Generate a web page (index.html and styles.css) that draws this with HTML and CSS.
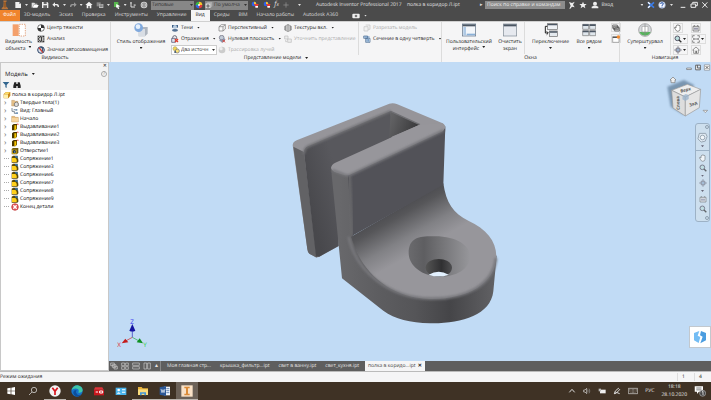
FILE: index.html
```html
<!DOCTYPE html>
<html lang="ru">
<head>
  <meta charset="UTF-8">
  <title>Autodesk Inventor Professional 2017</title>
  <link rel="stylesheet" href="styles.css">
</head>
<body>
  <!-- icon set -->
  <svg class="sprite" aria-hidden="true">
    <symbol id="i-new" viewBox="0 0 24 24"><path d="M4 3h11l6 6v12H4z" fill="#eee"/><path d="M15 3v6h6" fill="#999"/></symbol>
    <symbol id="i-open" viewBox="0 0 24 24"><path d="M2 5h8l3 3h6v3H8l-4 9H2z" fill="#ddd"/><path d="M8 12h15l-4 8H5z" fill="#fff"/></symbol>
    <symbol id="i-save" viewBox="0 0 24 24"><path d="M3 3h16l3 3v15H3z" fill="#eee"/><path d="M8 3h9v6H8zM7 13h11v8H7z" fill="#666"/></symbol>
    <symbol id="i-undo" viewBox="0 0 24 24"><path d="M9 4v5h6q6 0 6 9h-4q0-5-4-5H9v5L1 11z" fill="#eee"/></symbol>
    <symbol id="i-redo" viewBox="0 0 24 24"><path d="M15 4v5H9q-6 0-6 9h4q0-5 4-5h4v5l8-7z" fill="#999"/></symbol>
    <symbol id="i-home" viewBox="0 0 24 24"><path d="M12 2L1 12h4v10h5v-7h4v7h5V12h4z" fill="#f4f4f4"/></symbol>
    <symbol id="i-props" viewBox="0 0 24 24"><path d="M2 4h12v12H2z" fill="#888"/><path d="M9 9h13v12H9z" fill="#bbb"/><path d="M11 12h9M11 16h9" stroke="#555" stroke-width="2"/></symbol>
    <symbol id="i-update" viewBox="0 0 24 24"><path d="M3 3h13v15H3z" fill="#57b64d"/><path d="M10 9l12 7-6 1 3 6-4 1-3-6-3 3z" fill="#fff"/></symbol>
    <symbol id="i-pick" viewBox="0 0 24 24"><path d="M3 3h6v6H3zM14 10h6v5h-6z" fill="#aaa"/><path d="M6 9v9h12" stroke="#ddd" stroke-width="3" fill="none"/></symbol>
    <symbol id="i-globe" viewBox="0 0 24 24"><circle cx="12" cy="12" r="10" fill="#ddd"/><path d="M2 12h20M12 2v20M5 6q7 6 14 0M5 18q7-6 14 0" stroke="#777" stroke-width="2" fill="none"/></symbol>
    <symbol id="i-wheel" viewBox="0 0 24 24"><path d="M12 12V2a10 10 0 0 1 10 10z" fill="#f6c52b"/><path d="M12 12h10a10 10 0 0 1-10 10z" fill="#e23b3b"/><path d="M12 12v10A10 10 0 0 1 2 12z" fill="#3668e0"/><path d="M12 12H2A10 10 0 0 1 12 2z" fill="#3aba4a"/><circle cx="12" cy="12" r="3" fill="#fff"/></symbol>
    <symbol id="i-adjust" viewBox="0 0 24 24"><circle cx="9" cy="9" r="7" fill="#2e63e8"/><path d="M9 2a7 7 0 0 1 7 7H9z" fill="#f4c430"/><path d="M9 9h14l-6 13z" fill="#e83a32"/><path d="M13 15h8v5h-8z" fill="#fff"/></symbol>
    <symbol id="i-cube" viewBox="0 0 24 24"><path d="M2 8l6-5h14v13l-6 5H2z" fill="#aaa"/><path d="M2 8h14v13H2z" fill="#ddd"/><circle cx="9" cy="15" r="5" fill="#777"/></symbol>
    <symbol id="i-star" viewBox="0 0 24 24"><path d="M12 2l3 7h8l-6 5 2 8-7-5-7 5 2-8-6-5h8z" fill="#eee"/></symbol>
    <symbol id="i-dish" viewBox="0 0 24 24"><path d="M3 3l9 3 8-4-5 9 5 8-8-2-5 6H4l4-9z" fill="#eee"/></symbol>
    <symbol id="i-user" viewBox="0 0 24 24"><circle cx="12" cy="8" r="6" fill="#eee"/><path d="M2 22v-5l6-3h8l6 3v5z" fill="#eee"/></symbol>
    <symbol id="i-exchange" viewBox="0 0 24 24"><path d="M3 4l18 16M21 4L3 20" fill="none" stroke="#3b7de8" stroke-width="5"/><path d="M3 4l6 5M3 20l6-5" fill="none" stroke="#fff" stroke-width="4"/></symbol>
    <symbol id="i-help" viewBox="0 0 24 24"><circle cx="12" cy="12" r="10" fill="#f4f7ff" stroke="#99aacc" stroke-width="2"/><path d="M8 9q0-4 4-4t4 4q0 2-4 4v2M12 17v3" stroke="#2855a8" stroke-width="3" fill="none"/></symbol>
    <symbol id="i-gravity" viewBox="0 0 24 24"><circle cx="12" cy="12" r="10" fill="#fff" stroke="#333" stroke-width="2"/><path d="M12 12V2a10 10 0 0 1 10 10zM12 12v10A10 10 0 0 1 2 12z" fill="#333"/></symbol>
    <symbol id="i-zebra" viewBox="0 0 24 24"><path d="M2 2h20v20H2z" fill="#333"/><path d="M6 2q10 10 0 20M14 2q8 10 0 20M3 7l7 5-7 5M22 6l-6 6 6 6" stroke="#fff" stroke-width="2" fill="none"/></symbol>
    <symbol id="i-glyph" viewBox="0 0 24 24"><circle cx="12" cy="12" r="10" fill="#d8dde8" stroke="#2c4568" stroke-width="3"/><path d="M6 5l12 15" stroke="#d43a2c" stroke-width="4"/><path d="M10 5h7v11" stroke="#24405f" stroke-width="3" fill="none"/></symbol>
    <symbol id="i-shadow" viewBox="0 0 24 24"><path d="M3 3h18v8H3z" fill="#3d5f86"/><circle cx="12" cy="9" r="6" fill="#b9cce0"/><ellipse cx="12" cy="19" rx="9" ry="4" fill="#526f92"/></symbol>
    <symbol id="i-reflect" viewBox="0 0 24 24"><path d="M5 12V8q0-6 6-6t6 6v4" fill="none" stroke="#667" stroke-width="3"/><path d="M2 10h11v12H2z" fill="#dde4ee" stroke="#446" stroke-width="2"/><path d="M12 12l9 9M21 12l-9 9" stroke="#dc3a2c" stroke-width="4"/></symbol>
    <symbol id="i-lamp" viewBox="0 0 24 24"><circle cx="9" cy="8" r="6" fill="#f4d650" stroke="#aaa166" stroke-width="2"/><circle cx="16" cy="15" r="6" fill="#f8e27a" stroke="#667" stroke-width="2"/><path d="M7 15h5v6H7z" fill="#567"/></symbol>
    <symbol id="i-persp" viewBox="0 0 24 24"><path d="M3 8h12v13H3zM3 8l7-6h12l-7 6M22 2v13l-7 6" fill="#f8f8f8" stroke="#777" stroke-width="2"/></symbol>
    <symbol id="i-plane" viewBox="0 0 24 24"><circle cx="11" cy="8" r="7" fill="#c2ccd8" stroke="#667" stroke-width="2"/><path d="M3 16l18-6v8l-8 5z" fill="#879ab3"/><path d="M13 14l8 8M21 14l-8 8" stroke="#d9483e" stroke-width="3"/></symbol>
    <symbol id="i-ball" viewBox="0 0 24 24"><circle cx="12" cy="12" r="10" fill="#ccc"/><circle cx="9" cy="8" r="5" fill="#eee"/></symbol>
    <symbol id="i-texture" viewBox="0 0 24 24"><path d="M12 1l10 6v11l-10 5-10-5V7z" fill="#999" stroke="#555"/><path d="M8 4v16M12 4v18M16 4v16" stroke="#e3e3e3" stroke-width="2"/></symbol>
    <symbol id="i-refine" viewBox="0 0 24 24"><path d="M2 3h10v9H2zM11 12h11v10H11z" fill="#ededed" stroke="#bbb" stroke-width="2"/><path d="M5 15v5h4" stroke="#bbb" stroke-width="2" fill="none"/></symbol>
    <symbol id="i-slice" viewBox="0 0 24 24"><path d="M3 8h12v13H3zM8 3h13v13h-6" fill="#f1f1f1" stroke="#c2c2c2" stroke-width="2"/></symbol>
    <symbol id="i-quarter" viewBox="0 0 24 24"><path d="M2 3h12v7H2zM8 10h13v12H8z" fill="#dbe8f4" stroke="#41648b" stroke-width="2"/><path d="M4 6h16M12 12v8M16 12v8" stroke="#2d66a8" stroke-width="2"/></symbol>
    <symbol id="i-cascade" viewBox="0 0 24 24"><path d="M2 3h14v10H2zM5 7h14v10H5zM8 11h14v10H8z" fill="#eee" stroke="#444" stroke-width="2"/></symbol>
    <symbol id="i-addwin" viewBox="0 0 24 24"><path d="M2 5h19v17H2z" fill="#fff" stroke="#888" stroke-width="2"/><path d="M2 5h19v4H2z" fill="#555"/><circle cx="19" cy="6" r="5" fill="#f28a30"/></symbol>
    <symbol id="i-hand" viewBox="0 0 24 24"><path d="M6 12V6q2-2 3 0V4q2-3 3 0 2-3 3 1 3-2 3 2v9q-1 6-7 6-4 0-6-5l-4-6q2-2 5 1z" fill="#fff" stroke="#555" stroke-width="2"/></symbol>
    <symbol id="i-zoom" viewBox="0 0 24 24"><circle cx="10" cy="10" r="7" fill="#bdd" stroke="#556" stroke-width="3"/><path d="M15 15l7 7" stroke="#333" stroke-width="4"/></symbol>
    <symbol id="i-orbit" viewBox="0 0 24 24"><ellipse cx="12" cy="12" rx="10" ry="4" fill="none" stroke="#556" stroke-width="2"/><ellipse cx="12" cy="12" rx="4" ry="10" fill="none" stroke="#556" stroke-width="2"/><circle cx="12" cy="12" r="3" fill="#8ac"/></symbol>
    <symbol id="i-look" viewBox="0 0 24 24"><path d="M3 7h18v14H3zM7 3v4M17 3v4" fill="#eee" stroke="#555" stroke-width="2"/><path d="M6 11h12v6H6z" fill="#99a"/></symbol>
    <symbol id="i-fit" viewBox="0 0 24 24"><path d="M2 8V2h6M16 2h6v6M22 16v6h-6M8 22H2v-6" fill="none" stroke="#555" stroke-width="2"/><path d="M4 12h16M7 9l-3 3 3 3M17 9l3 3-3 3" fill="none" stroke="#555" stroke-width="2"/></symbol>
    <symbol id="i-house" viewBox="0 0 24 24"><path d="M12 3L2 12h3v10h14V12h3z" fill="#f5f5f5" stroke="#666" stroke-width="2"/><path d="M10 14h5v8h-5z" fill="#777"/></symbol>
    <symbol id="i-part" viewBox="0 0 24 24"><path d="M2 9l7-6h13v11l-6 8H2z" fill="#c98719"/><path d="M3 10h12v11H3z" fill="#fff0a8"/><path d="M9 4h12l-5 5H4z" fill="#ffdf6b"/></symbol>
    <symbol id="i-solids" viewBox="0 0 24 24"><path d="M2 4h8l2 3h9v14H2z" fill="#e6c188" stroke="#a98454"/><path d="M10 13l6-4 6 4v7l-6 3-6-3z" fill="#ddd" stroke="#555" stroke-width="2"/></symbol>
    <symbol id="i-views" viewBox="0 0 24 24"><path d="M3 3v10h7M8 8h5M10 13v6h5" stroke="#456" stroke-width="2" fill="none"/><path d="M13 6h6v5h-6zM14 16h7v5h-7z" fill="#79b"/></symbol>
    <symbol id="i-folder" viewBox="0 0 24 24"><path d="M2 4h9l2 3h9v14H2z" fill="#e7bc7d" stroke="#a97e46"/><path d="M3 9h18v11H3z" fill="#f7d49c"/></symbol>
    <symbol id="i-extrude" viewBox="0 0 24 24"><path d="M3 7l5-4h10v14l-5 5H3z" fill="#4b3700"/><path d="M10 7h6v12l-4 3h-2z" fill="#f6c400"/><path d="M17 2h5v5z" fill="#e11"/></symbol>
    <symbol id="i-hole" viewBox="0 0 24 24"><path d="M2 6l4-3h16v14l-4 5H2z" fill="#6d5a10"/><path d="M3 8h14v13H3z" fill="#c9a419"/><circle cx="10" cy="14" r="5" fill="#234"/><circle cx="11" cy="15" r="2" fill="#6ac"/></symbol>
    <symbol id="i-fillet" viewBox="0 0 24 24"><path d="M2 5l5-3h13v6l2 6v6l-3 3H2z" fill="#5a4a08"/><path d="M3 9h10q4 2 4 7v5H3z" fill="#ffd11a"/><path d="M12 3h7l3 9q-4-5-10-5z" fill="#2f6fa8"/></symbol>
    <symbol id="i-end" viewBox="0 0 24 24"><circle cx="12" cy="12" r="10" fill="#e4575a" stroke="#b33" stroke-width="2"/><path d="M7 7l10 10M17 7L7 17" stroke="#fff" stroke-width="4"/></symbol>
    <symbol id="i-tile4" viewBox="0 0 24 24"><path d="M2 3h9v8H2zM14 3h8v8h-8zM2 14h9v8H2zM14 14h8v8h-8z" fill="none" stroke="#ccc" stroke-width="2"/></symbol>
    <symbol id="i-rows" viewBox="0 0 24 24"><path d="M2 3h20v7H2zM2 14h20v7H2z" fill="none" stroke="#ccc" stroke-width="2"/></symbol>
    <symbol id="i-cols" viewBox="0 0 24 24"><path d="M3 3h8v18H3zM14 3h8v18h-8z" fill="none" stroke="#ccc" stroke-width="2"/></symbol>
    <symbol id="i-stack" viewBox="0 0 24 24"><path d="M2 3h11v8H2zM7 8h11v8H7zM12 13h10v8H12z" fill="#666" stroke="#ccc" stroke-width="2"/></symbol>
  </svg>

  <header class="titlebar">
    <svg class="logo" viewBox="0 0 24 24"><path d="M8 1h8v3h-2l1 12 4 3v3H4v-3l4-3 1-12H8z" fill="#b8743a"/><path d="M11 5h2v13h-2z" fill="#6b3d12"/></svg>
    <div class="quick">
      <button class="drop"><svg><use href="#i-new"/></svg></button>
      <button><svg><use href="#i-open"/></svg></button>
      <button><svg><use href="#i-save"/></svg></button>
      <button class="drop"><svg><use href="#i-undo"/></svg></button>
      <button class="drop"><svg><use href="#i-redo"/></svg></button>
      <button><svg><use href="#i-home"/></svg></button>
      <button class="drop"><svg><use href="#i-props"/></svg></button>
      <button class="drop"><svg><use href="#i-update"/></svg></button>
      <button><svg><use href="#i-pick"/></svg></button>
      <button><svg><use href="#i-globe"/></svg></button>
    </div>
    <span class="picker drop"><select aria-label="Материал"><option>Типовые</option></select></span>
    <button><svg><use href="#i-wheel"/></svg></button>
    <span class="picker drop"><svg><use href="#i-cube"/></svg><select aria-label="Внешний вид"><option>По умолча</option></select></span>
    <div class="adjust">
      <button><svg><use href="#i-adjust"/></svg></button>
      <button><svg><use href="#i-adjust"/></svg></button>
      <button class="fx">f<sub>x</sub></button>
      <button aria-label="Добавить"><svg viewBox="0 0 24 24"><path d="M12 4v16M4 12h16" stroke="#999" stroke-width="2"/></svg></button>
      <button class="drop" aria-label="Настройка"></button>
    </div>
    <h1>Autodesk Inventor Professional 2017 <span>полка в коридор Л.ipt</span></h1>
    <span class="arrow">▸</span>
    <input type="text" class="search" aria-label="Поиск" placeholder="Поиск по справке и командам">
    <div class="account">
      <button><svg><use href="#i-dish"/></svg></button>
      <button><svg><use href="#i-star"/></svg></button>
      <button class="login"><svg><use href="#i-user"/></svg>Вход</button>
      <button class="drop" aria-label="Меню входа"></button>
      <button><svg><use href="#i-exchange"/></svg></button>
      <button class="drop help"><svg><use href="#i-help"/></svg></button>
    </div>
    <div class="winbtns">
      <button aria-label="Свернуть"><svg viewBox="0 0 24 24"><path d="M5 19h14" stroke="#eee" stroke-width="3"/></svg></button>
      <button aria-label="Развернуть"><svg viewBox="0 0 24 24"><path d="M8 8V4h14v10h-5M3 9h14v10H3z" fill="none" stroke="#eee" stroke-width="3"/></svg></button>
      <button aria-label="Закрыть"><svg viewBox="0 0 24 24"><path d="M4 4l15 16M19 4L4 20" stroke="#eee" stroke-width="3"/></svg></button>
    </div>
  </header>

  <nav class="tabs">
    <a href="#" class="file">Файл</a>
    <a href="#">3D-модель</a>
    <a href="#">Эскиз</a>
    <a href="#">Проверка</a>
    <a href="#">Инструменты</a>
    <a href="#">Управление</a>
    <a href="#" class="active">Вид</a>
    <a href="#">Среды</a>
    <a href="#">BIM</a>
    <a href="#">Начало работы</a>
    <a href="#">Autodesk A360</a>
    <button class="drop" aria-label="Лента"><svg viewBox="0 0 24 24"><rect x="1" y="5" width="22" height="14" rx="3" fill="#eee"/><circle cx="12" cy="12" r="4" fill="#777"/></svg></button>
  </nav>

  <div class="ribbon">
    <section class="group g-visibility">
      <div class="tools">
        <button class="big">
          <svg viewBox="0 0 42 42"><rect x="2" y="4" width="18" height="35" fill="#f4a06b"/><rect x="22" y="4" width="18" height="35" fill="#fff" stroke="#d9814b" stroke-width="2" stroke-dasharray="4 3"/></svg>
          <span>Видимость<br>объекта<i class="caret"></i></span>
        </button>
        <div class="col">
          <button><svg><use href="#i-gravity"/></svg>Центр тяжести</button>
          <button><svg><use href="#i-zebra"/></svg>Анализ</button>
          <button><svg><use href="#i-glyph"/></svg>Значки автосовмещения</button>
        </div>
      </div>
      <h2>Видимость</h2>
    </section>

    <section class="group g-model">
      <div class="tools">
        <button class="big">
          <svg viewBox="0 0 42 42"><path d="M14 18l8-6h19v20l-8 8H14z" fill="#aeb5bf"/><path d="M14 18h19v22H14z" fill="#d8dde4"/><circle cx="14" cy="14" r="13" fill="#80a9dd"/><circle cx="12" cy="11" r="7" fill="#e6f1fd"/></svg>
          Стиль отображения
          <i class="caret"></i>
        </button>
        <div class="col">
          <button class="drop"><svg><use href="#i-shadow"/></svg>Тени</button>
          <button class="drop"><svg><use href="#i-reflect"/></svg>Отражения</button>
          <span class="picker light drop"><svg><use href="#i-lamp"/></svg><select aria-label="Освещение"><option>Два источн</option></select></span>
        </div>
        <div class="col">
          <button class="drop"><svg><use href="#i-persp"/></svg>Перспективный</button>
          <button class="drop"><svg><use href="#i-plane"/></svg>Нулевая плоскость</button>
          <button disabled><svg><use href="#i-ball"/></svg>Трассировка лучей</button>
        </div>
        <div class="col">
          <button class="drop"><svg><use href="#i-texture"/></svg>Текстуры вкл.</button>
          <button disabled><svg><use href="#i-refine"/></svg>Уточнить представление</button>
        </div>
        <div class="col ruled">
          <button disabled><svg><use href="#i-slice"/></svg>Разрезать модель</button>
          <button class="drop"><svg><use href="#i-quarter"/></svg>Сечение в одну четверть</button>
        </div>
      </div>
      <h2 class="drop">Представление модели</h2>
    </section>

    <section class="group g-windows">
      <div class="tools">
        <button class="big">
          <svg viewBox="0 0 42 42"><rect x="1" y="3" width="40" height="36" fill="#f3f6fa" stroke="#596b80" stroke-width="2"/><path d="M2 4h38v6H2z" fill="#4b5663"/><path d="M4 12h8v25H4z" fill="#afc9e5"/><path d="M14 32h25v5H14z" fill="#8ab0d8"/></svg>
          <span>Пользовательский<br>интерфейс<i class="caret"></i></span>
        </button>
        <button class="big">
          <svg viewBox="0 0 42 42"><rect x="1" y="3" width="40" height="36" fill="#e6e9ef" stroke="#7d8792" stroke-width="2"/><path d="M2 4h38v6H2z" fill="#4b5663"/></svg>
          <span>Очистить<br>экран</span>
        </button>
        <button class="big ruled">
          <svg viewBox="0 0 42 42"><rect x="10" y="2" width="30" height="17" fill="#eef1f5" stroke="#666" stroke-width="2"/><rect x="16" y="24" width="24" height="16" fill="#e4e9ee" stroke="#666" stroke-width="2"/><path d="M10 10H4v20h8M8 25l5 5-5 5" fill="none" stroke="#222" stroke-width="3"/><path d="M11 3h28v4H11zM17 25h22v4H17z" fill="#4b5663"/></svg>
          Переключение
          <i class="caret"></i>
        </button>
        <button class="big">
          <svg viewBox="0 0 42 42"><path d="M2 4h18v15H2zM23 4h18v15H23zM2 23h18v15H2zM23 23h18v15H23z" fill="#dfe6ec" stroke="#777" stroke-width="2"/><path d="M2 4h18v5H2zM23 4h18v5H23zM2 23h18v5H2zM23 23h18v5H23z" fill="#4b5663"/></svg>
          Все рядом
          <i class="caret"></i>
        </button>
        <div class="col mini">
          <button><svg><use href="#i-cascade"/></svg></button>
          <button><svg><use href="#i-addwin"/></svg></button>
        </div>
      </div>
      <h2>Окна</h2>
    </section>

    <section class="group g-nav">
      <div class="tools">
        <button class="big">
          <svg viewBox="0 0 42 42"><circle cx="21" cy="21" r="19" fill="#d9dce0" stroke="#888" stroke-width="2"/><path d="M4 27a19 19 0 0 0 34 0z" fill="#56b45c"/><path d="M12 10h18v17H12z" fill="#fff" stroke="#999" stroke-width="2"/><path d="M21 3v36" stroke="#888" stroke-width="2"/></svg>
          Суперштурвал
          <i class="caret"></i>
        </button>
        <div class="navgrid">
          <button><svg><use href="#i-hand"/></svg></button>
          <button><svg><use href="#i-look"/></svg></button>
          <button class="drop"><svg><use href="#i-zoom"/></svg></button>
          <button class="drop"><svg><use href="#i-fit"/></svg></button>
          <button class="drop"><svg><use href="#i-orbit"/></svg></button>
          <button><svg><use href="#i-house"/></svg></button>
        </div>
      </div>
      <h2>Навигация</h2>
    </section>
  </div>

  <main class="workspace">
    <aside class="browser">
      <div class="grip"><button aria-label="Закрыть панель">✕</button></div>
      <div class="browser-head">
        <button class="drop">Модель</button>
        <button class="q">?</button>
      </div>
      <div class="browser-tools">
        <svg viewBox="0 0 24 24"><path d="M2 3h20l-8 9v9l-4-2v-7z" fill="#31658e"/></svg>
        <svg viewBox="0 0 24 24"><path d="M4 4h6v5h4V4h6l3 10v7h-9v-6h-4v6H1v-7z" fill="#222"/></svg>
      </div>
      <ul class="tree">
        <li class="root"><svg><use href="#i-part"/></svg>полка в коридор Л.ipt</li>
        <li class="node"><svg><use href="#i-solids"/></svg>Твердые тела(1)</li>
        <li class="node"><svg><use href="#i-views"/></svg>Вид: Главный</li>
        <li class="node"><svg><use href="#i-folder"/></svg>Начало</li>
        <li class="node"><svg><use href="#i-extrude"/></svg>Выдавливание1</li>
        <li class="node"><svg><use href="#i-extrude"/></svg>Выдавливание2</li>
        <li class="node"><svg><use href="#i-extrude"/></svg>Выдавливание3</li>
        <li class="node"><svg><use href="#i-hole"/></svg>Отверстие1</li>
        <li><svg><use href="#i-fillet"/></svg>Сопряжение1</li>
        <li><svg><use href="#i-fillet"/></svg>Сопряжение3</li>
        <li><svg><use href="#i-fillet"/></svg>Сопряжение6</li>
        <li><svg><use href="#i-fillet"/></svg>Сопряжение7</li>
        <li><svg><use href="#i-fillet"/></svg>Сопряжение8</li>
        <li><svg><use href="#i-fillet"/></svg>Сопряжение9</li>
        <li><svg><use href="#i-end"/></svg>Конец детали</li>
      </ul>
    </aside>

    <div class="viewer">
      <div class="canvas">
        <svg class="model" viewBox="0 0 690 705">
          <defs>
            <linearGradient id="plateIn" gradientUnits="userSpaceOnUse" x1="75" y1="300" x2="180" y2="270"><stop offset="0" stop-color="#48484c"/><stop offset="1" stop-color="#58585d"/></linearGradient>
            <linearGradient id="slot" gradientUnits="userSpaceOnUse" x1="330" y1="80" x2="410" y2="110"><stop offset="0" stop-color="#626264"/><stop offset="1" stop-color="#39393b"/></linearGradient>
            <linearGradient id="fillet" gradientUnits="userSpaceOnUse" x1="343" y1="342" x2="415" y2="470"><stop offset="0" stop-color="#4c4c50"/><stop offset=".2" stop-color="#565659"/><stop offset=".65" stop-color="#818185"/><stop offset="1" stop-color="#97969b"/></linearGradient>
            <linearGradient id="rim" gradientUnits="userSpaceOnUse" x1="180" y1="0" x2="650" y2="0"><stop offset="0" stop-color="#68686b"/><stop offset=".25" stop-color="#5d5d60"/><stop offset=".48" stop-color="#555558"/><stop offset=".7" stop-color="#454548"/><stop offset="1" stop-color="#626265"/></linearGradient>
            <linearGradient id="cone" x1="0" y1="0" x2="1" y2="0"><stop offset="0" stop-color="#6a6a6d"/><stop offset=".25" stop-color="#5e5e61"/><stop offset=".55" stop-color="#757578"/><stop offset="1" stop-color="#97979b"/></linearGradient>
            <linearGradient id="bore" x1="0" y1="0" x2="1" y2="0"><stop offset="0" stop-color="#555"/><stop offset=".6" stop-color="#303032"/><stop offset="1" stop-color="#4e4e50"/></linearGradient>
            <filter id="soft"><feGaussianBlur stdDeviation="3"/></filter>
          </defs>
          <!-- back plate -->
          <path d="M38 154Q38 144 50 139L328 29Q340 25 352 31L488 88Q497 93 496 108L490 160 176 230V456L118 488Q109 493 102 487L88 479Q83 475 82 466z" fill="#96959a"/>
          <path d="M40 158L72 174 110 491 102 487 88 479Q83 475 82 466z" fill="#626265"/>
          <path d="M72 174Q72 163 84 157L332 51 336 130 176 215V456L118 488 108 488z" fill="url(#plateIn)"/>
          <path d="M72 180Q72 163 84 157L332 51" fill="none" stroke="#737377" stroke-width="7" filter="url(#soft)"/>
          <path d="M332 52L420 92 328 131z" fill="url(#slot)"/>
          <path d="M332 52l88 40" stroke="#707074" stroke-width="4"/>
          <!-- side wall and rim -->
          <path d="M153 222L170 226 210 245 220 430 650 485 640 592C632 665 540 690 450 688 390 686 345 675 310 650L186 553z" fill="url(#rim)"/>
          <!-- shelf top -->
          <path d="M213 428L490 268C498 325 520 360 565 380 620 405 650 442 649 490 645 570 560 617 450 615 330 610 245 540 213 428z" fill="url(#fillet)"/>
          <path d="M206 428C228 535 330 612 450 614 560 616 640 572 648 492" fill="none" stroke="#77777b" stroke-width="8" filter="url(#soft)"/>
          <!-- front plate -->
          <path d="M204 242L490 104 496 96 490 272 216 426z" fill="#525258"/>
          <path d="M208 244l8 182" stroke="#68686b" stroke-width="10" filter="url(#soft)"/>
          <path d="M153 222Q154 211 166 206L418 92 486 88Q497 92 495 103L489 111 210 242Q200 246 190 242L163 233Q155 230 153 222z" fill="#97969b"/>
          <path d="M157 228l35 14q10 4 20 0L491 109" fill="none" stroke="#77777b" stroke-width="7" filter="url(#soft)"/>
          <!-- countersunk hole -->
          <path d="M386 478C386 435 412 426 455 427 530 424 570 455 571 488 568 525 530 548 478 548 425 546 387 515 386 478z" fill="url(#cone)"/>
          <path d="M437 520C440 487 512 487 516 520 516 535 505 545 477 548 450 546 437 535 437 520z" fill="url(#bore)"/>
          <path d="M446 542Q476 525 506 542 476 553 446 542z" fill="#e3f1ff"/>
        </svg>

        <div class="doc-btns">
          <svg viewBox="0 0 24 24"><path d="M4 14h16v5H4z" fill="#fff" stroke="#555" stroke-width="2"/></svg>
          <svg viewBox="0 0 24 24"><path d="M4 4h16v16H4zM10 4v10h10" fill="#fff" stroke="#555" stroke-width="3"/></svg>
          <svg viewBox="0 0 24 24"><path d="M3 3h18v18H3z" fill="#fff" stroke="#777" stroke-width="2"/><path d="M7 7l10 10M17 7L7 17" stroke="#555" stroke-width="3"/></svg>
        </div>

        <svg class="viewcube" viewBox="0 0 135 135">
          <path d="M10 35L60 15 90 30 60 120 20 95z" fill="#5d7994" filter="url(#soft)" opacity=".7"/>
          <path d="M23 46L70 28 110 43 64 66z" fill="#eee" stroke="#999" stroke-width="2"/>
          <path d="M23 46L64 66V123L27 99z" fill="#ddd" stroke="#999" stroke-width="2"/>
          <path d="M64 66L110 43 106 98 64 123z" fill="#e5e5e5" stroke="#999" stroke-width="2"/>
          <path d="M56 62l9-5 9 3v12l-10 6-9-5z" fill="#9cb4cc" opacity=".8"/>
          <text x="50" y="53" transform="rotate(-14 50 53)">Верх</text>
          <text x="47" y="104" transform="rotate(-92 47 104)">Слева</text>
          <text x="77" y="95" transform="rotate(-20 77 95)">Зад</text>
          <path d="M27 6l-9 9h3v8h12v-8h3z" fill="#eee" stroke="#777" stroke-width="2"/>
          <path d="M117 106h14l-7 7z" fill="#eee" stroke="#888" stroke-width="2"/>
        </svg>

        <div class="navbar">
          <i class="dot"></i>
          <svg class="wheel" viewBox="0 0 24 24"><path d="M5 3h14l3 7-4 10-9 2-7-7z" fill="#e7eef4" stroke="#7b8894" stroke-width="2"/><circle cx="12" cy="12" r="5" fill="#fff" stroke="#7b8894" stroke-width="2"/></svg>
          <i class="caret"></i>
          <hr>
          <svg><use href="#i-hand"/></svg>
          <svg><use href="#i-zoom"/></svg>
          <i class="caret"></i>
          <svg><use href="#i-orbit"/></svg>
          <i class="caret"></i>
          <svg><use href="#i-look"/></svg>
          <svg><use href="#i-zoom"/></svg>
          <i class="dot"></i>
        </div>

        <svg class="axes" viewBox="0 0 96 90">
          <path d="M46 58V30" stroke="#22b" stroke-width="2"/><path d="M46 58L24 70" stroke="#c22" stroke-width="2"/><path d="M46 58l22 12" stroke="#2a4" stroke-width="2"/>
          <path d="M46 18l9 20q-9 5-18 0z" fill="#1414a0"/>
          <path d="M14 76l11-14 9 11z" fill="#c41b1b"/>
          <path d="M78 76L68 61l-9 12z" fill="#0c8f20"/>
          <text x="40" y="17" fill="#3a3af0">Z</text>
          <text x="1" y="87" fill="#e03030">X</text>
          <text x="79" y="87" fill="#2ed046">Y</text>
        </svg>

        <button class="assist" aria-label="A360"><svg viewBox="0 0 42 42"><path d="M3 9l16-6-5 14 8 4-5 18L3 31z" fill="#74bdf4"/><path d="M24 3l15 6v22l-17 9 7-20-8-4z" fill="#4b9de0"/></svg></button>
      </div>

      <div class="doctabs">
        <svg><use href="#i-stack"/></svg>
        <svg><use href="#i-tile4"/></svg>
        <svg><use href="#i-rows"/></svg>
        <svg><use href="#i-cols"/></svg>
        <span class="up">▲</span>
        <a href="#">Моя главная стр...</a>
        <a href="#">крышка_фильтр...ipt</a>
        <a href="#">свет в ванну.ipt</a>
        <a href="#">свет_кухня.ipt</a>
        <a href="#" class="active">полка в коридо...ipt <b>✕</b></a>
      </div>
    </div>
  </main>

  <footer class="status">
    <span>Режим ожидания</span>
    <span class="num">1</span>
    <span class="num">4</span>
  </footer>

  <div class="taskbar">
    <button aria-label="Пуск"><svg viewBox="0 0 36 36"><path d="M7 10l10-2v9H7zM19 8l11-2v11H19zM7 19h10v9L7 26zM19 19h11v11l-11-2z" fill="#fff"/></svg></button>
    <button aria-label="Поиск"><svg viewBox="0 0 36 36"><circle cx="21" cy="15" r="8" fill="none" stroke="#eee" stroke-width="2"/><path d="M15 21l-9 9" stroke="#eee" stroke-width="2"/></svg></button>
    <button class="open" aria-label="Яндекс"><svg viewBox="0 0 36 36"><circle cx="18" cy="18" r="17" fill="#f3f3f3"/><path d="M10 8l8 11L26 8M18 18v12" fill="none" stroke="#d8151e" stroke-width="5"/></svg></button>
    <button aria-label="Edge"><svg viewBox="0 0 36 36"><circle cx="18" cy="18" r="17" fill="#1673cb"/><path d="M2 15Q6 1 20 1q15 3 15 15-1 8-13 7 4-10-4-12-10-2-16 4z" fill="#3fc7a8"/><path d="M17 15q-5 8 3 14 6 3 11-1-5 8-14 7Q6 31 7 21q2-7 10-6z" fill="#0c4e9c"/></svg></button>
    <button aria-label="Радио"><svg viewBox="0 0 36 36"><path d="M3 14h30v17H3z" fill="#c8161d"/><path d="M6 7h22l4 7H3z" fill="#e0343a"/><path d="M8 21h7M20 18h9v6h-9z" stroke="#fff" stroke-width="3" fill="none"/></svg></button>
    <button aria-label="Панель"><svg viewBox="0 0 36 36"><path d="M2 8h32v22H2z" fill="#4ab4ec"/><circle cx="11" cy="15" r="4" fill="#fff"/><path d="M5 26q6-9 12 0zM21 13h10v3H21zM21 20h10v3H21z" fill="#fff"/></svg></button>
    <button class="open" aria-label="Проводник"><svg viewBox="0 0 36 36"><path d="M3 6h11l3 4h16v20H3z" fill="#e8b13a"/><path d="M3 13h30v17H3z" fill="#fbdc7d"/><path d="M9 31v-9h18v9h-5v-5h-8v5z" fill="#4497d6"/></svg></button>
    <button class="open" aria-label="Word"><svg viewBox="0 0 36 36"><path d="M15 5h18v26H15z" fill="#eef3fb"/><path d="M22 11h9M22 17h9M22 23h9" stroke="#2b5797" stroke-width="2"/><path d="M2 7l19-4v30L2 29z" fill="#2b5797"/><path d="M6 12l3 11 3-9 3 9 3-11" fill="none" stroke="#fff" stroke-width="2"/></svg></button>
    <button class="open current" aria-label="Inventor"><svg viewBox="0 0 36 36"><path d="M1 1h34v34H1z" fill="#f9e1c7"/><path d="M10 5h16v5h-5v16h5v5H10v-5h5V10h-5z" fill="#db8b38"/></svg></button>
    <div class="tray">
      <svg viewBox="0 0 24 24"><path d="M4 16l8-9 8 9" fill="none" stroke="#ddd" stroke-width="3"/></svg>
      <svg viewBox="0 0 24 24"><path d="M2 9h4l5-5v16l-5-5H2z" fill="none" stroke="#ddd" stroke-width="2"/><path d="M14 8q3 4 0 8M18 5q5 7 0 14" fill="none" stroke="#999" stroke-width="2"/></svg>
      <svg viewBox="0 0 24 24"><path d="M6 8h17v11H6z" fill="#eee"/><path d="M2 5h7v8H2z" fill="#bbb"/></svg>
      <svg viewBox="0 0 24 24"><path d="M4 20l3-8L16 4l4 4-9 9zM4 20q7-7 16 0" fill="none" stroke="#ddd" stroke-width="3"/></svg>
      <svg class="kbd" viewBox="0 0 30 24"><path d="M1 4h28v16H1z" fill="none" stroke="#ddd" stroke-width="2"/><path d="M4 8h22M4 12h22M8 16h14" stroke="#ccc" stroke-width="2" stroke-dasharray="2 2"/></svg>
      <span class="lang">РУС</span>
      <time>18:18<br>28.10.2020</time>
      <svg class="notes" viewBox="0 0 32 32"><path d="M2 3h22v15H13l-5 6v-6H2z" fill="#fff"/><path d="M6 8h14M6 13h14" stroke="#555" stroke-width="2"/><circle cx="23" cy="22" r="8" fill="#444" stroke="#aaa" stroke-width="2"/><path d="M21 19l3-2v10" fill="none" stroke="#fff" stroke-width="2"/></svg>
    </div>
  </div>
</body>
</html>
```
FILE: styles.css
```css
* {
  box-sizing: border-box;
}

body {
  margin: 0;
  min-height: 100vh;
  display: flex;
  flex-direction: column;
  font-family: "Open Sans", "Noto Sans", sans-serif;
  font-size: 5px;
  line-height: 8px;
  text-rendering: geometricPrecision;
  color: #222;
  background: #f5f5f6;
  overflow: hidden;
}

svg {
  width: 8px;
  height: 8px;
  flex: none;
}

.sprite {
  display: none;
}

button {
  display: inline-flex;
  align-items: center;
  padding: 0;
  border: 0;
  background: none;
  font: inherit;
  text-rendering: inherit;
  color: inherit;
  white-space: nowrap;
}

a {
  color: inherit;
  text-decoration: none;
  white-space: nowrap;
}

select, input {
  font: inherit;
  text-rendering: inherit;
  border: 0;
  padding: 0 2px;
  min-width: 0;
}

h1, h2 {
  margin: 0;
  font-size: 5px;
  font-weight: normal;
}

.drop::after,
.caret {
  content: "";
  flex: none;
  width: 3px;
  height: 2px;
  margin-left: 4px;
  background: currentColor;
  clip-path: polygon(0 0, 100% 0, 50% 100%);
}

/* drop-down with an optional icon */
.picker {
  display: flex;
  align-items: center;
  width: 43px;
  height: 9px;
  margin-right: 1px;
  background: #878787;
  color: #333;
}

.picker select {
  appearance: none;
  flex: 1;
  height: 8px;
  padding: 0 0 0 1px;
  background: none;
  color: inherit;
}

.picker.drop::after {
  margin: 0 1px;
}

/* title bar */
.titlebar {
  display: flex;
  align-items: center;
  height: 10px;
  background: #4b4b4b;
  color: #e0e0e0;
}

.logo {
  width: 10px;
  height: 10px;
  margin-right: 4px;
}

.quick {
  display: flex;
  justify-content: space-between;
  width: 134px;
  margin-right: 3px;
}

.quick .drop::after {
  margin-left: 3px;
}

.titlebar .picker + button {
  margin-right: 2px;
}

.adjust {
  display: flex;
  justify-content: space-between;
  width: 50px;
  margin-left: 2px;
}

.fx {
  font-size: 7px;
  font-style: italic;
}

.fx sub {
  font-size: 5px;
}

.titlebar h1 {
  flex: 1;
  padding-left: 15px;
  white-space: nowrap;
}

.titlebar h1 span {
  margin-left: 4px;
}

.arrow {
  width: 5px;
}

.search {
  width: 80px;
  height: 8px;
  background: #8c8c8c;
  color: #eee;
}

.search::placeholder {
  color: #eee;
}

.account {
  display: flex;
  justify-content: space-between;
  width: 105px;
  margin: 0 6px 0 3px;
}

.login {
  gap: 3px;
  margin-right: 20px;
}

.winbtns {
  display: flex;
  gap: 3px;
  padding-right: 2px;
}

/* ribbon tabs */
.tabs {
  display: flex;
  height: 11px;
  line-height: 11px;
  background: #4b4b4b;
  color: #ddd;
}

.tabs a {
  padding: 0 5px 0 4px;
}

.tabs .file {
  padding: 0 4px 0 3px;
  background: #f0842c;
  color: #fff;
}

.tabs .active {
  background: #f5f5f6;
  color: #222;
}

.tabs button {
  margin-left: 9px;
}

/* ribbon */
.ribbon {
  display: grid;
  grid-template-columns: 111fr 331fr 178fr 91fr;
  height: 41px;
  border-top: 1px solid #d0d0d0;
}

.group {
  display: flex;
  flex-direction: column;
  justify-content: space-between;
  border-right: 1px solid #dcdcdc;
  min-width: 0;
}

.group h2 {
  display: flex;
  justify-content: center;
  align-items: center;
  line-height: 8px;
}

.tools {
  display: grid;
  height: 32px;
}

.g-visibility .tools {
  grid-template-columns: 37px 1fr;
}

.g-model .tools {
  grid-template-columns: 60px 47px 66px 74px 1fr;
}

.g-windows .tools {
  grid-template-columns: 54px 28px 48px 34px 1fr;
}

.g-nav .tools {
  grid-template-columns: 50px 1fr;
}

.big {
  flex-direction: column;
  justify-content: flex-start;
  padding-top: 1px;
  line-height: 7px;
  text-align: center;
}

.big svg {
  width: 14px;
  height: 14px;
  margin-bottom: 2px;
}

.big > .caret {
  margin: 1px 0 0;
}

.big span .caret {
  display: inline-block;
  margin: 0 0 2px 3px;
}

.col {
  display: flex;
  flex-direction: column;
  align-items: flex-start;
  gap: 2px;
  padding-top: 1px;
}

.col button {
  gap: 2px;
  height: 9px;
}

.col button.drop::after {
  margin-left: 2px;
}

.col button:disabled {
  color: #aaa;
}

.ruled {
  border-left: 1px solid #dcdcdc;
  padding-left: 4px;
}

.picker.light {
  width: 46px;
  height: 10px;
  border: 1px solid #ccc;
  background: #fff;
}

.mini {
  padding-left: 5px;
}

.mini button,
.navgrid button {
  border: 1px solid #ddd;
}

.navgrid {
  display: grid;
  grid-template-columns: 16px 16px;
  gap: 1px 2px;
  align-content: start;
  justify-items: start;
  padding: 1px 0 0 2px;
  border-left: 1px solid #dcdcdc;
}

.navgrid .drop::after {
  margin: 0 1px;
}

/* model browser */
.workspace {
  flex: 1;
  display: flex;
}

.browser {
  width: 109px;
  border: 1px solid #c8c8c8;
  background: #fff;
}

.grip,
.browser-head,
.browser-tools {
  display: flex;
  align-items: center;
  background: #f3f3f3;
}

.grip {
  justify-content: flex-end;
  height: 6px;
  padding-right: 1px;
}

.browser-head {
  justify-content: space-between;
  height: 10px;
  padding: 0 1px 0 4px;
  font-size: 6px;
}

.q {
  width: 6px;
  height: 6px;
  justify-content: center;
  border: 1px solid #aaa;
  border-radius: 50%;
  font-size: 5px;
  color: #999;
}

.browser-tools {
  gap: 3px;
  height: 11px;
  padding-left: 1px;
}

.tree {
  margin: 0;
  padding: 1px 0 0;
  list-style: none;
  color: #000;
}

.tree li {
  display: flex;
  align-items: center;
  gap: 1px;
  height: 8px;
  padding-left: 2px;
}

.tree li:not(.root)::before {
  content: "";
  width: 5px;
  height: 1px;
  margin: 0 1px;
  border-top: 1px dotted #aaa;
}

.tree li.node::before {
  content: "›";
  height: 8px;
  border: 0;
  font-size: 8px;
  line-height: 7px;
  color: #777;
}

/* viewer */
.viewer {
  flex: 1;
  display: flex;
  flex-direction: column;
  min-width: 0;
}

.canvas {
  position: relative;
  flex: 1;
  display: flex;
  justify-content: center;
  align-items: center;
  background: #c1dbf5;
}

.model {
  width: 230px;
  height: 235px;
  margin-right: 30px;
}

.doc-btns {
  position: absolute;
  top: 2px;
  right: 0;
  display: flex;
  gap: 1px;
}

.doc-btns svg {
  height: 7px;
}

.viewcube {
  position: absolute;
  top: 13px;
  right: 2px;
  width: 45px;
  height: 45px;
}

.viewcube text {
  font-size: 13px;
  font-weight: bold;
  fill: #555;
}

.navbar {
  position: absolute;
  top: 61px;
  right: 1px;
  width: 15px;
  height: 99px;
  display: flex;
  flex-direction: column;
  justify-content: space-between;
  align-items: center;
  padding: 1px 0;
  border: 1px solid #9db2c6;
  border-radius: 3px;
  background: #cddfee;
  color: #667;
}

.navbar svg {
  opacity: .7;
}

.navbar .wheel {
  width: 11px;
  height: 11px;
}

.navbar .caret {
  margin: 0;
}

.navbar hr {
  width: 100%;
  margin: 0;
  border: 0;
  border-top: 1px solid #9db2c6;
}

.dot {
  align-self: flex-end;
  width: 4px;
  height: 4px;
  border: 1px solid #8fa0b0;
  border-radius: 50%;
}

.axes {
  position: absolute;
  left: 8px;
  bottom: 13px;
  width: 32px;
  height: 30px;
}

.axes text {
  font-size: 19px;
}

.assist {
  position: absolute;
  right: 0;
  bottom: 13px;
  width: 22px;
  height: 22px;
  justify-content: center;
  border: 1px solid #c2c8ce;
  background: #fff;
}

.assist svg {
  width: 14px;
  height: 14px;
}

.doctabs {
  display: flex;
  align-items: center;
  gap: 3px;
  height: 10px;
  padding-left: 1px;
  line-height: 10px;
  background: #5e5e5e;
  color: #e4e4e4;
}

.doctabs .up {
  width: 7px;
  border-right: 1px solid #888;
}

.doctabs a {
  padding: 0 3px;
}

.doctabs .active {
  background: #f5f5f6;
  color: #444;
}

.doctabs b {
  margin-left: 1px;
  color: #222;
}

/* status bar */
.status {
  display: flex;
  align-items: center;
  height: 11px;
  border-top: 1px solid #bbb;
}

.status span:first-child {
  flex: 1;
}

.status .num {
  width: 17px;
  padding-left: 4px;
  border-left: 1px solid #ddd;
}

/* windows taskbar */
.taskbar {
  display: flex;
  height: 18px;
  background: #3f3225;
  color: #f0f0f0;
}

.taskbar button {
  width: 22px;
  justify-content: center;
  border-bottom: 1px solid transparent;
}

.taskbar button svg {
  width: 12px;
  height: 12px;
}

.taskbar .open {
  border-bottom-color: #b9b4ae;
}

.taskbar .current {
  background: #6b6158;
}

.tray {
  display: flex;
  align-items: center;
  gap: 7px;
  margin-left: auto;
  padding-right: 5px;
}

.tray .kbd {
  width: 10px;
}

.tray time {
  line-height: 8px;
  text-align: center;
}

.tray .notes {
  width: 12px;
  height: 12px;
}
```
